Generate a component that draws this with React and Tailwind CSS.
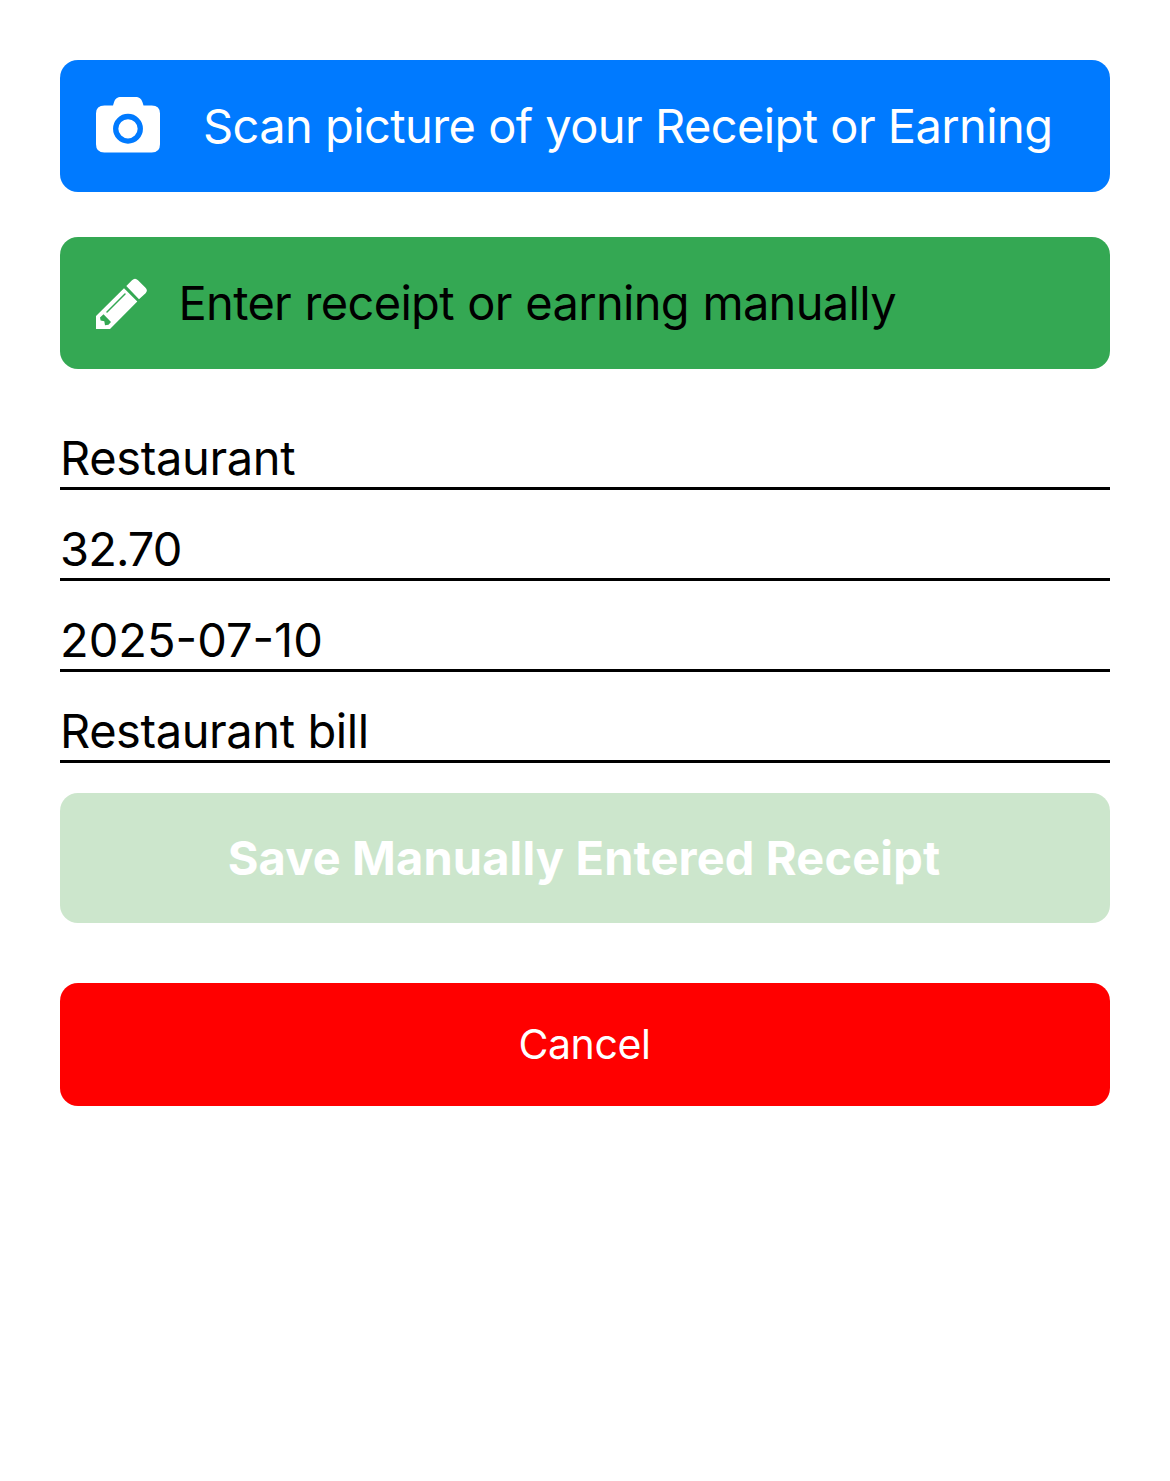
const fields = [
  { text: "Restaurant", spacing: "tracking-[-0.35px]" },
  { text: "32.70", spacing: "tracking-[-0.9px]" },
  { text: "2025-07-10", spacing: "tracking-[0px]" },
  { text: "Restaurant bill", spacing: "tracking-[-0.42px]" },
];

function CameraIcon() {
  return (
    <svg viewBox="0 0 64 56" className="mb-[3px] h-14 w-16 shrink-0">
      <path fill="#fff" d="M8.5 8.500H17l1-3.200C19.300 1.500 21.300 0 25 0h14.500c3.700 0 5.700 1.500 7 5.300l1 3.200h8.200q8.300 0 8.300 8v30.700q0 8.300-8.300 8.300H8.300Q0 55.500 0 47.200V16.500Q0 8.500 8.500 8.500Z" />
      <circle cx="32" cy="31.800" r="12.300" fill="none" stroke="#007aff" strokeWidth="5.300" />
    </svg>
  );
}

function PencilIcon() {
  return (
    <svg viewBox="0 0 51 51" className="h-[51px] w-[51px] shrink-0">
      <path fill="#fff" d="M30.300 8 36 2.200q3-3 6 0l7.300 7.300q3 3 .3 5.700L43 21.200ZM28 10.200 41.300 23.500 14 51H0V38Z" />
      <path fill="none" stroke="#34a853" strokeWidth="1.500" strokeLinecap="round" d="M11 34 29 16" />
      <path fill="#34a853" d="M4 39.500 7.500 36.300 15 44 12.500 46.800 9 47.200 8.300 43.300 4.600 42.400Z" />
    </svg>
  );
}

export default function App() {
  return (
    <main className="flex h-[1481px] w-[1170px] flex-col bg-white px-[60px] pt-[60px] text-[47px] leading-[57px] text-black font-['Inter',sans-serif]">
      <button className="flex h-[132px] items-center rounded-[18px] bg-[#007aff] pl-9 text-white">
        <CameraIcon />
        <span className="ml-[43px] whitespace-nowrap pb-[2px] text-left tracking-[-0.6px] [word-spacing:0.2px]">Scan picture of your Receipt or Earning</span>
      </button>
      <button className="mt-[45px] flex h-[132px] items-center rounded-[18px] bg-[#34a853] pl-9">
        <PencilIcon />
        <span className="ml-[31.5px] whitespace-nowrap pb-[2px] tracking-[-0.68px] [word-spacing:0.9px]">Enter receipt or earning manually</span>
      </button>
      <div className="mt-[30px]">
        {fields.map(({ text, spacing }) => (
          <div key={text} className="flex h-[91px] items-end border-b-[3px] border-black pb-px">
            <span className={spacing}>{text}</span>
          </div>
        ))}
      </div>
      <button className="mt-[30px] flex h-[130px] items-center justify-center rounded-[18px] bg-[#cce6cc] pb-[2px] pr-[2px] font-bold tracking-[0.13px] text-white">Save Manually Entered Receipt</button>
      <button className="mt-[60px] flex h-[123px] items-center justify-center rounded-[18px] bg-[#ff0000] pb-px pr-px text-[41px] tracking-[-0.38px] text-white">Cancel</button>
    </main>
  );
}
